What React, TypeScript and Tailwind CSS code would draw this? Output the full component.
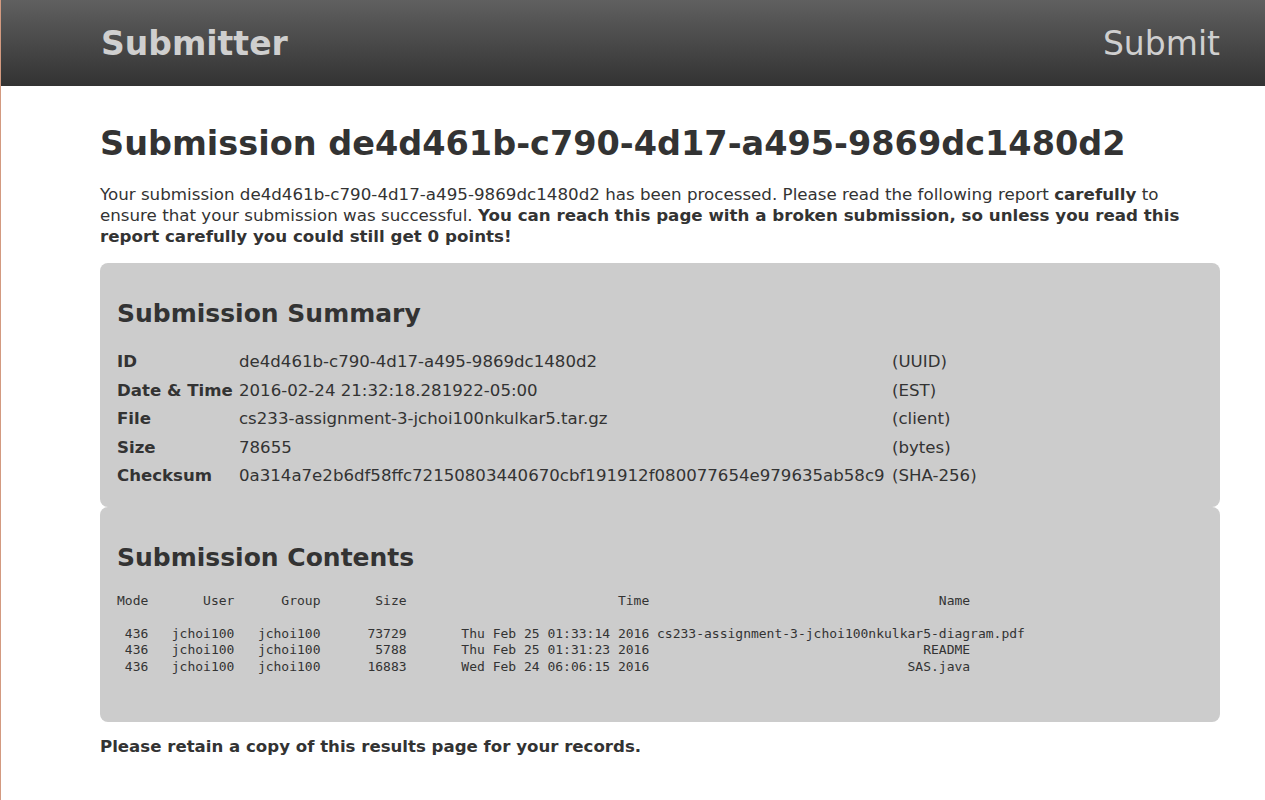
const summaryRows = [
  { label: 'ID', value: 'de4d461b-c790-4d17-a495-9869dc1480d2', note: '(UUID)' },
  { label: 'Date & Time', value: '2016-02-24 21:32:18.281922-05:00', note: '(EST)' },
  { label: 'File', value: 'cs233-assignment-3-jchoi100nkulkar5.tar.gz', note: '(client)' },
  { label: 'Size', value: '78655', note: '(bytes)' },
  { label: 'Checksum', value: '0a314a7e2b6df58ffc72150803440670cbf191912f080077654e979635ab58c9', note: '(SHA-256)' },
];

// tar-style listing, kept as preformatted text
const listing = [
  'Mode       User      Group       Size                           Time                                     Name',
  '',
  ' 436   jchoi100   jchoi100      73729       Thu Feb 25 01:33:14 2016 cs233-assignment-3-jchoi100nkulkar5-diagram.pdf',
  ' 436   jchoi100   jchoi100       5788       Thu Feb 25 01:31:23 2016                                   README',
  ' 436   jchoi100   jchoi100      16883       Wed Feb 24 06:06:15 2016                                 SAS.java',
].join('\n');

const App = () => {
  return (
    <div className="min-h-[800px] bg-white border-l border-[#d39a80] text-[#333] font-['DejaVu_Sans',sans-serif]">
      <header className="h-[86px] bg-gradient-to-b from-[#606060] to-[#333333] flex items-center justify-between pl-[100px] pr-[45px]">
        <span className="text-[33px] font-bold text-[#cfcfcf] leading-none">Submitter</span>
        <span className="text-[33px] text-[#cfcfcf] leading-none">Submit</span>
      </header>

      <main className="ml-[99px] w-[1120px]">
        <h1 className="mt-[38px] text-[33.5px] font-bold leading-[40px]">
          Submission de4d461b-c790-4d17-a495-9869dc1480d2
        </h1>
        <p className="mt-[20px] text-[16.7px] leading-[21px]">
          Your submission de4d461b-c790-4d17-a495-9869dc1480d2 has been processed. Please read the following report{' '}
          <b>carefully</b> to ensure that your submission was successful.{' '}
          <b>You can reach this page with a broken submission, so unless you read this report carefully you could still get 0 points!</b>
        </p>

        <section className="mt-[16px] bg-[#cccccc] rounded-[8px] px-[17px] pt-[33px] pb-[16px]">
          <h2 className="text-[25px] font-bold leading-[36px]">Submission Summary</h2>
          <div className="mt-[16px] grid grid-cols-[122px_653px_auto] text-[16.6px] leading-[28.5px]">
            {summaryRows.map((r) => (
              <div key={r.label} className="contents">
                <span className="font-bold">{r.label}</span>
                <span>{r.value}</span>
                <span>{r.note}</span>
              </div>
            ))}
          </div>
        </section>

        <section className="bg-[#cccccc] rounded-[8px] px-[17px] pt-[33px] pb-[47px]">
          <h2 className="text-[25px] font-bold leading-[36px]">Submission Contents</h2>
          <pre className="mt-[17px] font-['DejaVu_Sans_Mono',monospace] text-[13px] leading-[16.5px]">{listing}</pre>
        </section>

        <p className="mt-[14px] text-[16.6px] font-bold leading-[21px]">
          Please retain a copy of this results page for your records.
        </p>
      </main>
    </div>
  );
};

export default App;
